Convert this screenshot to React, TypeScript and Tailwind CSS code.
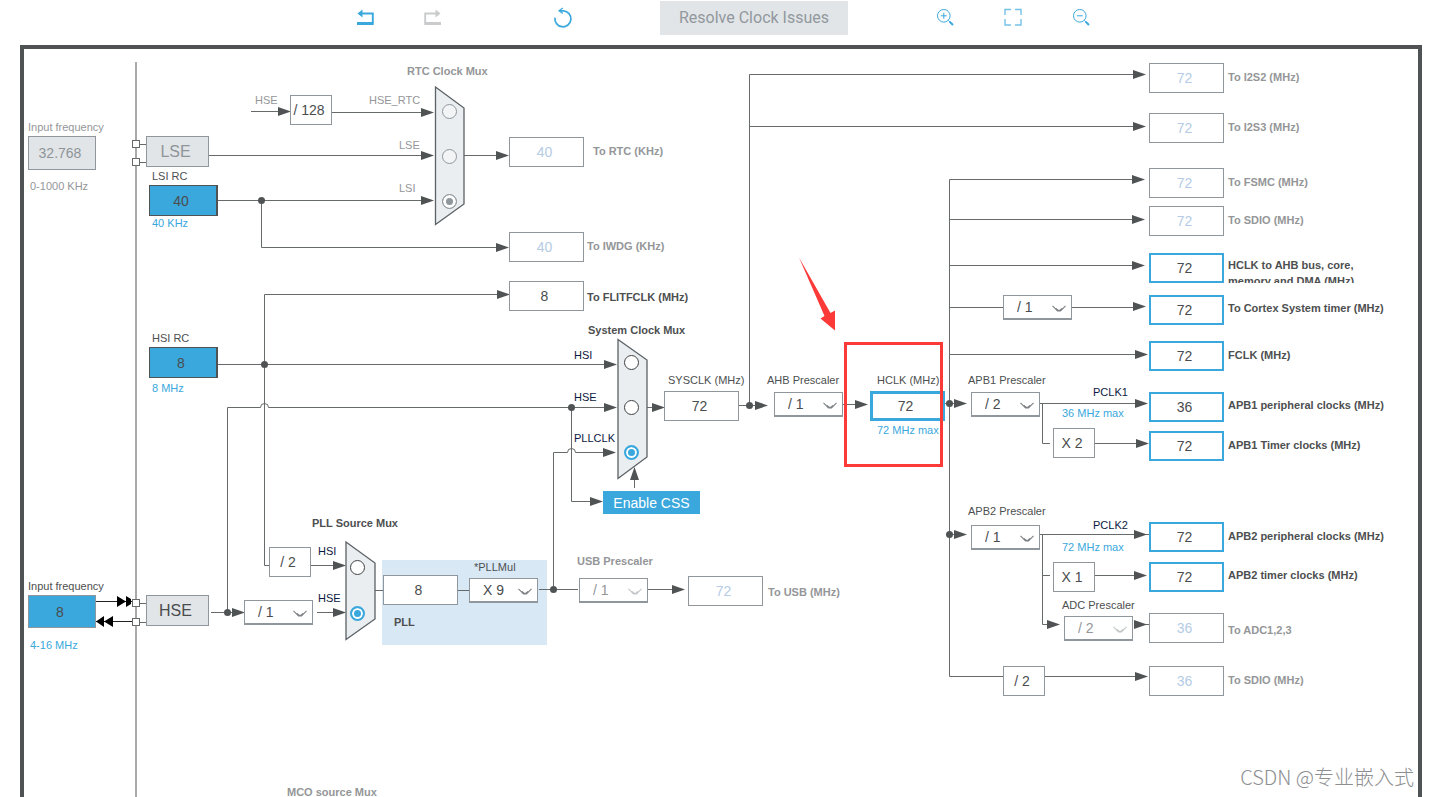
import clsx from "clsx";
import type { ReactNode } from "react";

// The diagram uses sheet coordinates; this is the sheet position of the frame's inner corner
const ORIGIN_X = 24;
const ORIGIN_Y = 49;

const at = (x: number, y: number) => ({ left: x - ORIGIN_X, top: y - ORIGIN_Y });

type Tone = "dark" | "muted" | "blue" | "signal";

interface Caption {
  x: number;
  y: number;
  text: string;
  tone: Tone;
  bold?: boolean;
  htmlFor?: string;
}

interface Field {
  id: string;
  x: number;
  y: number;
  value: string;
  kind: "source" | "lockedSource" | "rc" | "plain" | "off" | "active" | "strong";
}

interface Divider {
  id: string;
  x: number;
  y: number;
  value: string;
  off?: boolean;
}

interface Block {
  x: number;
  y: number;
  text: string;
}

interface MuxInput {
  group: string;
  name: string;
  x: number;
  y: number;
  checked?: boolean;
  off?: boolean;
}

const toneClass: Record<Tone, string> = {
  dark: "text-[#4d4f50]",
  muted: "text-[#949698]",
  blue: "text-[#3aa8dc]",
  signal: "text-[#0b1840]",
};

const fieldClass: Record<Field["kind"], string> = {
  source: "h-[33px] w-[68px] border-[#8f979d] bg-[#3aa8dc] text-[#4a4c4e]",
  lockedSource: "h-[34px] w-[68px] border-[#8f979d] bg-[#e1e5e8] text-[#8f9499]",
  rc: "h-[31px] w-[69px] border-r-2 border-[#4f5354] bg-[#3aa8dc] text-[#4a4c4e]",
  plain: "h-[30px] w-[75px] border-[#8f979d] bg-white text-[#4a4c4e]",
  off: "h-[30px] w-[75px] border-[#8f979d] bg-white text-[#b5cce6]",
  active: "h-[30px] w-[75px] border-2 border-[#3aa8dc] bg-white text-[#4a4c4e]",
  strong: "h-[30px] w-[75px] border-3 border-[#3aa8dc] bg-white text-[#4a4c4e]",
};

const captions: Caption[] = [
  { x: 28, y: 120, text: "Input frequency", tone: "muted", htmlFor: "lse-in" },
  { x: 30, y: 179, text: "0-1000 KHz", tone: "muted" },
  { x: 152, y: 169, text: "LSI RC", tone: "dark", htmlFor: "lsi" },
  { x: 152, y: 216, text: "40 KHz", tone: "blue" },
  { x: 255, y: 93, text: "HSE", tone: "muted" },
  { x: 369, y: 93, text: "HSE_RTC", tone: "muted", htmlFor: "rtc-HSE_RTC" },
  { x: 399, y: 138, text: "LSE", tone: "muted", htmlFor: "rtc-LSE" },
  { x: 399, y: 181, text: "LSI", tone: "muted", htmlFor: "rtc-LSI" },
  { x: 407, y: 64, text: "RTC Clock Mux", tone: "muted", bold: true },
  { x: 593, y: 144, text: "To RTC (KHz)", tone: "muted", bold: true, htmlFor: "rtc" },
  { x: 587, y: 239, text: "To IWDG (KHz)", tone: "muted", bold: true, htmlFor: "iwdg" },
  { x: 587, y: 290, text: "To FLITFCLK (MHz)", tone: "dark", bold: true, htmlFor: "flitf" },
  { x: 152, y: 331, text: "HSI RC", tone: "dark", htmlFor: "hsi" },
  { x: 152, y: 381, text: "8 MHz", tone: "blue" },
  { x: 588, y: 323, text: "System Clock Mux", tone: "dark", bold: true },
  { x: 574, y: 348, text: "HSI", tone: "signal", htmlFor: "sys-HSI" },
  { x: 574, y: 390, text: "HSE", tone: "signal", htmlFor: "sys-HSE" },
  { x: 574, y: 431, text: "PLLCLK", tone: "signal", htmlFor: "sys-PLLCLK" },
  { x: 668, y: 373, text: "SYSCLK (MHz)", tone: "dark", htmlFor: "sysclk" },
  { x: 767, y: 373, text: "AHB Prescaler", tone: "dark", htmlFor: "ahb" },
  { x: 877, y: 373, text: "HCLK (MHz)", tone: "dark", htmlFor: "hclk" },
  { x: 877, y: 423, text: "72 MHz max", tone: "blue" },
  { x: 968, y: 373, text: "APB1 Prescaler", tone: "dark", htmlFor: "apb1" },
  { x: 1093, y: 385, text: "PCLK1", tone: "signal" },
  { x: 1062, y: 406, text: "36 MHz max", tone: "blue" },
  { x: 968, y: 504, text: "APB2 Prescaler", tone: "dark", htmlFor: "apb2" },
  { x: 1093, y: 518, text: "PCLK2", tone: "signal" },
  { x: 1062, y: 540, text: "72 MHz max", tone: "blue" },
  { x: 1062, y: 598, text: "ADC Prescaler", tone: "dark", htmlFor: "adc" },
  { x: 1228, y: 70, text: "To I2S2 (MHz)", tone: "muted", bold: true, htmlFor: "i2s2" },
  { x: 1228, y: 120, text: "To I2S3 (MHz)", tone: "muted", bold: true, htmlFor: "i2s3" },
  { x: 1228, y: 175, text: "To FSMC (MHz)", tone: "muted", bold: true, htmlFor: "fsmc" },
  { x: 1228, y: 213, text: "To SDIO (MHz)", tone: "muted", bold: true, htmlFor: "sdio" },
  { x: 1228, y: 301, text: "To Cortex System timer (MHz)", tone: "dark", bold: true, htmlFor: "cortex-out" },
  { x: 1228, y: 348, text: "FCLK (MHz)", tone: "dark", bold: true, htmlFor: "fclk" },
  { x: 1228, y: 398, text: "APB1 peripheral clocks (MHz)", tone: "dark", bold: true, htmlFor: "apb1-per" },
  { x: 1228, y: 438, text: "APB1 Timer clocks (MHz)", tone: "dark", bold: true, htmlFor: "apb1-tim" },
  { x: 1228, y: 529, text: "APB2 peripheral clocks (MHz)", tone: "dark", bold: true, htmlFor: "apb2-per" },
  { x: 1228, y: 568, text: "APB2 timer clocks (MHz)", tone: "dark", bold: true, htmlFor: "apb2-tim" },
  { x: 1228, y: 623, text: "To ADC1,2,3", tone: "muted", bold: true, htmlFor: "adc-out" },
  { x: 1228, y: 673, text: "To SDIO (MHz)", tone: "muted", bold: true, htmlFor: "sdio-half" },
  { x: 28, y: 579, text: "Input frequency", tone: "dark", htmlFor: "hse-in" },
  { x: 30, y: 638, text: "4-16 MHz", tone: "blue" },
  { x: 312, y: 516, text: "PLL Source Mux", tone: "dark", bold: true },
  { x: 318, y: 544, text: "HSI", tone: "signal", htmlFor: "pllsrc-HSI" },
  { x: 318, y: 591, text: "HSE", tone: "signal", htmlFor: "pllsrc-HSE" },
  { x: 394, y: 615, text: "PLL", tone: "dark", bold: true, htmlFor: "pll-in" },
  { x: 474, y: 560, text: "*PLLMul", tone: "dark", htmlFor: "pllmul" },
  { x: 577, y: 554, text: "USB Prescaler", tone: "muted", bold: true, htmlFor: "usb-pre" },
  { x: 768, y: 585, text: "To USB (MHz)", tone: "muted", bold: true, htmlFor: "usb" },
  { x: 287, y: 785, text: "MCO source Mux", tone: "muted", bold: true },
];

const fields: Field[] = [
  { id: "lse-in", x: 28, y: 136, value: "32.768", kind: "lockedSource" },
  { id: "lsi", x: 149, y: 185, value: "40", kind: "rc" },
  { id: "rtc", x: 509, y: 137, value: "40", kind: "off" },
  { id: "iwdg", x: 509, y: 232, value: "40", kind: "off" },
  { id: "flitf", x: 509, y: 281, value: "8", kind: "plain" },
  { id: "hsi", x: 149, y: 347, value: "8", kind: "rc" },
  { id: "sysclk", x: 664, y: 391, value: "72", kind: "plain" },
  { id: "hclk", x: 870, y: 391, value: "72", kind: "strong" },
  { id: "hse-in", x: 28, y: 595, value: "8", kind: "source" },
  { id: "pll-in", x: 383, y: 575, value: "8", kind: "plain" },
  { id: "usb", x: 688, y: 576, value: "72", kind: "off" },
  { id: "i2s2", x: 1149, y: 63, value: "72", kind: "off" },
  { id: "i2s3", x: 1149, y: 113, value: "72", kind: "off" },
  { id: "fsmc", x: 1149, y: 168, value: "72", kind: "off" },
  { id: "sdio", x: 1149, y: 206, value: "72", kind: "off" },
  { id: "ahb-bus", x: 1149, y: 253, value: "72", kind: "active" },
  { id: "cortex-out", x: 1149, y: 295, value: "72", kind: "active" },
  { id: "fclk", x: 1149, y: 341, value: "72", kind: "active" },
  { id: "apb1-per", x: 1149, y: 392, value: "36", kind: "active" },
  { id: "apb1-tim", x: 1149, y: 431, value: "72", kind: "active" },
  { id: "apb2-per", x: 1149, y: 522, value: "72", kind: "active" },
  { id: "apb2-tim", x: 1149, y: 562, value: "72", kind: "active" },
  { id: "adc-out", x: 1149, y: 613, value: "36", kind: "off" },
  { id: "sdio-half", x: 1149, y: 666, value: "36", kind: "off" },
];

const dividers: Divider[] = [
  { id: "pll-div", x: 244, y: 600, value: "/ 1" },
  { id: "pllmul", x: 469, y: 578, value: "X 9" },
  { id: "usb-pre", x: 579, y: 578, value: "/ 1", off: true },
  { id: "ahb", x: 774, y: 392, value: "/ 1" },
  { id: "cortex", x: 1003, y: 295, value: "/ 1" },
  { id: "apb1", x: 971, y: 392, value: "/ 2" },
  { id: "apb2", x: 971, y: 525, value: "/ 1" },
  { id: "adc", x: 1064, y: 616, value: "/ 2", off: true },
];

const blocks: Block[] = [
  { x: 290, y: 95, text: "/ 128" },
  { x: 269, y: 547, text: "/ 2" },
  { x: 1053, y: 428, text: "X 2" },
  { x: 1053, y: 562, text: "X 1" },
  { x: 1003, y: 666, text: "/ 2" },
];

const muxInputs: MuxInput[] = [
  { group: "rtc", name: "HSE_RTC", x: 442, y: 104, off: true },
  { group: "rtc", name: "LSE", x: 442, y: 149, off: true },
  { group: "rtc", name: "LSI", x: 442, y: 194, off: true, checked: true },
  { group: "sys", name: "HSI", x: 624, y: 355 },
  { group: "sys", name: "HSE", x: 624, y: 400 },
  { group: "sys", name: "PLLCLK", x: 624, y: 445, checked: true },
  { group: "pllsrc", name: "HSI", x: 350, y: 560 },
  { group: "pllsrc", name: "HSE", x: 350, y: 606, checked: true },
];

const wires = [
  // RTC branch
  "M251 111.5H280",
  "M332 112.5H422",
  "M209 155.5H422",
  "M218 200.5H422",
  "M464 155.5H498",
  "M261.5 200.5V247.5H498",
  // HSI
  "M218 364.5H606",
  "M498 294.5H264.5V565.5H269",
  "M311 565.5H334",
  // HSE
  "M211 612.5H237",
  "M227.5 612.5V407.5H260.5A4 4 0 0 1 268.5 407.5H606",
  "M571.5 407.5V501.5H592",
  "M317 612.5H334",
  // PLL
  "M375 590.5H383M457 590.5H469",
  "M539 589.5H578M648 589.5H673",
  "M553.5 589.5V452.5H567.5A4 4 0 0 1 575.5 452.5H604",
  // SYSCLK
  "M647 407.5H657",
  "M634.5 488V478",
  "M739 405.5H758",
  "M749.5 405.5V74.5H1135",
  "M749.5 126.5H1135",
  "M843 404.5H857",
  // HCLK
  "M945 403.5H957",
  "M1134 179.5H949.5V676.5H1003",
  "M1045 676.5H1136",
  "M949.5 219.5H1134",
  "M949.5 265.5H1134",
  "M949.5 307.5H1003M1071 307.5H1135",
  "M949.5 354.5H1136",
  "M1040 403.5H1136",
  "M1042.5 403.5V443.5H1050M1095 443.5H1137",
  "M949.5 534.5H957",
  "M1040 534.5H1149",
  "M1042.5 534.5V624.5H1049",
  "M1042.5 575.5H1050M1095 575.5H1135",
  "M1145 624.5H1149",
];

// [tip x, centre y]
const arrows: [number, number][] = [
  [291, 111], [434, 112], [434, 155], [434, 200], [509, 155], [509, 247],
  [510, 294], [617, 364], [617, 407], [616, 452], [603, 501], [665, 407],
  [768, 405], [868, 404], [967, 403], [967, 534], [245, 612], [346, 565],
  [346, 612], [685, 589], [1146, 74], [1146, 126], [1145, 179], [1145, 219],
  [1145, 265], [1146, 306], [1148, 354], [1148, 403], [1149, 443],
  [1147, 534], [1147, 575], [1147, 624], [1148, 676], [1060, 624],
];

const junctions: [number, number][] = [
  [261, 200], [264, 364], [227, 612], [571, 407], [553, 589],
  [749, 405], [949, 403], [949, 534],
];

const pins = [144, 162, 603, 622];

function Wiring() {
  return (
    <svg className="pointer-events-none absolute inset-0 h-full w-full" aria-hidden="true">
      <g transform="translate(-24 -49)">
        <rect x="382" y="560" width="165" height="85" fill="#d9e8f5" />
        <path d="M136 62V1200" stroke="#a9a9a9" strokeWidth="2" />
        <g fill="none" stroke="#666a6b">
          {wires.map((d) => (
            <path key={d} d={d} />
          ))}
        </g>

        {/* Mux bodies */}
        <g fill="#eaeef1" stroke="#5b6165" strokeWidth="1.3">
          <path d="M435.5 87L464 108V204L435.5 224.5Z" />
          <path d="M618 339.5L647 360V457L618 478.5Z" />
          <path d="M346 542L375 563V619L346 639.5Z" />
        </g>

        <g fill="#4f5354">
          {arrows.map(([x, y]) => (
            <path key={`${x}-${y}`} d={`M${x} ${y + 0.5}L${x - 13} ${y - 4}V${y + 5}Z`} />
          ))}
          <path d="M634.5 467L630 480H639Z" />
          {junctions.map(([x, y]) => (
            <circle key={`${x}-${y}`} cx={x + 0.5} cy={y + 0.5} r="3.5" />
          ))}
        </g>

        {/* Crystal in / out */}
        <g fill="#000" stroke="#222">
          <path d="M96 601.5H132M96 621.5H132" />
          <path d="M117 596V607L126 601.5ZM126 596V607L131 604V599Z" stroke="none" />
          <path d="M104 616V627L96 621.5ZM113 616V627L104 621.5Z" stroke="none" />
        </g>

        {pins.map((y) => (
          <g key={y} fill="#fff" stroke="#666a6b">
            <path d={`M140 ${y + 0.5}H146`} />
            <rect x="132.5" y={y - 3.5} width="7" height="7" />
          </g>
        ))}
      </g>
    </svg>
  );
}

function ToolButton({ label, disabled, children }: { label: string; disabled?: boolean; children: ReactNode }) {
  return (
    <button
      type="button"
      aria-label={label}
      disabled={disabled}
      className={clsx("size-[18px] shrink-0", disabled ? "text-[#c9cbcc]" : "text-[#3aa8dc]")}
    >
      <svg viewBox="0 0 18 18" className="size-full overflow-visible" fill="none" stroke="currentColor">
        {children}
      </svg>
    </button>
  );
}

function Toolbar() {
  return (
    <header className="flex h-[45px] items-start justify-center pl-4">
      <div className="flex gap-[50px] pt-2">
        <ToolButton label="Undo">
          <path d="M3 5.5H16.8V15" strokeWidth="1.9" />
          <path d="M17.7 15.5H1" strokeWidth="3" />
          <path d="M6.5 1.5V9.5L1.5 5.5Z" fill="currentColor" stroke="none" />
        </ToolButton>
        <ToolButton label="Redo" disabled>
          <path d="M15 5.5H1.2V15" strokeWidth="1.9" />
          <path d="M.3 15.5H17" strokeWidth="3" />
          <path d="M11.5 1.5V9.5L16.5 5.5Z" fill="currentColor" stroke="none" />
        </ToolButton>
      </div>
      <div className="ml-[112px] pt-[9px]">
        <ToolButton label="Reset">
          <path d="M1 8.6A8 8 0 1 0 9.5 1.8H5.5" strokeWidth="1.7" />
          <path d="M8.8 -1L5 1.8L8.8 4.6" strokeWidth="1.2" />
        </ToolButton>
      </div>
      <button
        type="button"
        disabled
        className="mx-[88px] mt-px h-[34px] w-[188px] shrink-0 bg-[#e1e5e8] font-[Roboto] text-base text-[#92989d]"
      >
        Resolve Clock Issues
      </button>
      <div className="flex gap-[50px] pt-2">
        <ToolButton label="Zoom in">
          <circle cx="7.8" cy="7.8" r="6.3" />
          <path d="M4.8 7.8H10.8M7.8 4.8V10.8M12.3 12.3L14 14" />
          <path d="M13.6 13.6L17 17" strokeWidth="2" />
        </ToolButton>
        <ToolButton label="Fit to window">
          <path
            d="M1 7V1.5H7M11 1.5H17V7M17 11V17H11M7 17H1V11"
            strokeWidth="1.4"
            strokeOpacity="0.7"
          />
        </ToolButton>
        <ToolButton label="Zoom out">
          <circle cx="7.8" cy="7.8" r="6.3" />
          <path d="M4.8 7.8H10.8M12.3 12.3L14 14" />
          <path d="M13.6 13.6L17 17" strokeWidth="2" />
        </ToolButton>
      </div>
    </header>
  );
}

function DividerSelect({ id, x, y, value, off }: Divider) {
  return (
    <div className="absolute h-[25px] w-[69px]" style={at(x, y)}>
      <select
        id={id}
        aria-label={id}
        defaultValue={value}
        disabled={off}
        className={clsx(
          "size-full appearance-none border border-b-2 border-[#8f979d] bg-white pl-[13px] text-sm leading-5 opacity-100",
          off ? "text-[#949698]" : "text-[#4a4c4e]"
        )}
      >
        <option>{value}</option>
      </select>
      <svg
        viewBox="0 0 14 8"
        className={clsx("pointer-events-none absolute top-[10px] right-1.5 h-2 w-3.5", off ? "text-[#c3c6c8]" : "text-[#7d8285]")}
        fill="none"
        stroke="currentColor"
        aria-hidden="true"
      >
        <path d="M.5 .8L5.5 6H8.5L13.5 .8M4 3.5L6 5.2H8L10 3.5" strokeWidth="1.1" />
      </svg>
    </div>
  );
}

function MuxRadio({ group, name, x, y, checked, off }: MuxInput) {
  return (
    <input
      type="radio"
      id={`${group}-${name}`}
      name={group}
      defaultChecked={checked}
      disabled={off}
      style={at(x, y)}
      className={clsx(
        "absolute size-[15px] appearance-none rounded-full border",
        off
          ? "border-[#8f979d] bg-[#f2f4f6] checked:bg-[#8f979d] checked:shadow-[inset_0_0_0_3px_white]"
          : "border-[#3f4345] bg-white checked:border-2 checked:border-[#3aa8dc] checked:bg-[#3aa8dc] checked:shadow-[inset_0_0_0_2px_white]"
      )}
    />
  );
}

export default function App() {
  return (
    <div className="flex min-h-screen flex-col bg-white font-['Liberation_Sans',Arial,sans-serif]">
      <Toolbar />

      <main className="relative mr-2 ml-5 flex-1 overflow-hidden border-4 border-b-0 border-[#4f5354]">
        <Wiring />

        {blocks.map((b) => (
          <div
            key={`${b.x}-${b.y}`}
            style={at(b.x, b.y)}
            className="absolute flex h-[30px] w-[42px] items-center justify-center border border-[#8f979d] bg-white pr-1 text-sm whitespace-nowrap text-[#4a4c4e]"
          >
            {b.text}
          </div>
        ))}

        {/* Oscillator pins */}
        <button
          type="button"
          disabled
          style={at(146, 136)}
          className="absolute h-[31px] w-[63px] border border-[#8f979d] bg-[#e1e5e8] pr-1 text-base text-[#8f9499]"
        >
          LSE
        </button>
        <button
          type="button"
          style={at(146, 595)}
          className="absolute h-[31px] w-[63px] border border-[#8f979d] bg-[#e1e5e8] pr-1 text-base text-[#4a4c4e]"
        >
          HSE
        </button>

        {fields.map((f) => (
          <input
            key={f.id}
            id={f.id}
            type="text"
            defaultValue={f.value}
            disabled={f.kind === "off" || f.kind === "lockedSource"}
            style={at(f.x, f.y)}
            className={clsx("absolute border pr-1 text-center text-sm", fieldClass[f.kind])}
          />
        ))}

        {dividers.map((d) => (
          <DividerSelect key={d.id} {...d} />
        ))}

        {muxInputs.map((m) => (
          <MuxRadio key={`${m.group}-${m.name}`} {...m} />
        ))}

        <button
          type="button"
          style={at(603, 491)}
          className="absolute h-[23px] w-[97px] bg-[#3aa8dc] text-sm text-white"
        >
          Enable CSS
        </button>

        {captions.map((c) => {
          const className = clsx(
            "absolute text-[11px] leading-[14px] whitespace-nowrap",
            toneClass[c.tone],
            c.bold && "font-bold"
          );
          return c.htmlFor ? (
            <label key={`${c.x}-${c.y}`} htmlFor={c.htmlFor} style={at(c.x, c.y)} className={className}>
              {c.text}
            </label>
          ) : (
            <span key={`${c.x}-${c.y}`} style={at(c.x, c.y)} className={className}>
              {c.text}
            </span>
          );
        })}
        <label
          htmlFor="ahb-bus"
          style={at(1228, 257)}
          className="absolute h-[26px] w-36 overflow-hidden text-[11px] leading-4 font-bold text-[#4d4f50]"
        >
          HCLK to AHB bus, core, memory and DMA (MHz)
        </label>

        {/* Red callout around HCLK */}
        <div
          style={at(844, 342)}
          className="pointer-events-none absolute h-[125px] w-[99px] border-3 border-[#fc3a37]"
        />
        <svg
          viewBox="0 0 38 74"
          style={at(798, 257)}
          className="pointer-events-none absolute h-[74px] w-[38px]"
          aria-hidden="true"
        >
          <path d="M1 .5L32.5 56L37 53.5V73.5L22.5 61.5L26.5 59Z" fill="#fc3a37" />
        </svg>

        <p className="absolute right-1 bottom-1 font-['Noto_Sans_CJK_SC',sans-serif] text-xl leading-8 font-light whitespace-nowrap text-[#8c8e90]">
          CSDN @专业嵌入式
        </p>
      </main>
    </div>
  );
}
